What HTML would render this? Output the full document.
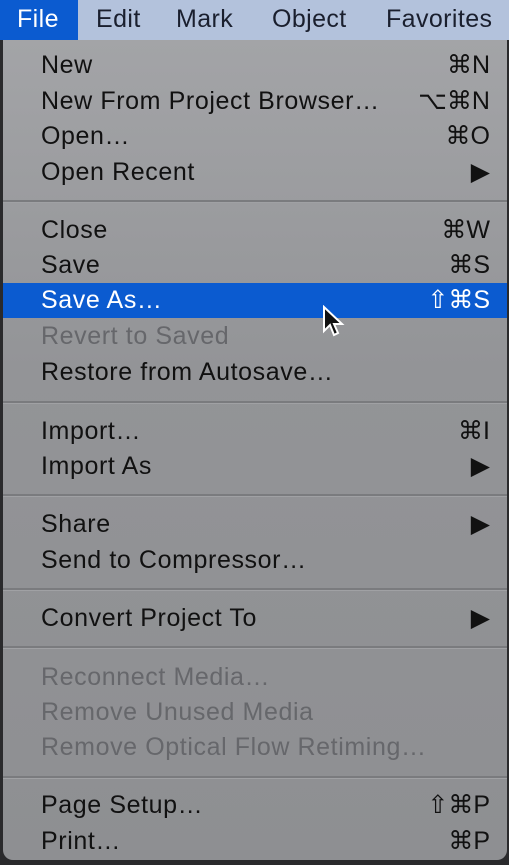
<!DOCTYPE html><html><head><style>
body{margin:0;width:509px;height:865px;background:#2a2a2c;overflow:hidden;font-family:"Liberation Sans",sans-serif;position:relative}
.bar{position:absolute;left:0;top:0;width:509px;height:40px;background:#b3c2dc;}
.bar span{position:absolute;top:5px;font-size:25px;letter-spacing:0.4px;color:#1a1f2e}
.menu{position:absolute;left:3px;top:40px;width:504px;height:820px;background:linear-gradient(#a3a4a7,#939497 40%,#8e8f92);border-radius:0 0 10px 10px}
.r{position:absolute;left:41px;font-size:25px;letter-spacing:0.6px;color:#111;line-height:36px;height:36px;white-space:nowrap}
.k{position:absolute;right:19px;font-size:25px;color:#111;line-height:36px;height:36px;white-space:nowrap}
.d{color:#66676b}
.sep{position:absolute;left:3px;width:504px;height:2px;background:#7a7b7e;border-bottom:1px solid #a0a1a4}
.hl{position:absolute;left:3px;top:283px;width:504px;height:35px;background:#0b5bd0}
</style></head><body>
<div class="bar"><div style="position:absolute;left:0;top:0;width:78px;height:40px;background:#0b5bd0"></div>
<span style="left:17px;color:#fff">File</span><span style="left:96px">Edit</span><span style="left:176px">Mark</span><span style="left:272px">Object</span><span style="left:386px">Favorites</span></div>
<div class="menu"></div>
<div class="hl"></div>
<div class="r" style="top:47px">New</div><div class="k" style="top:47px">⌘N</div>
<div class="r" style="top:83px">New From Project Browser…</div><div class="k" style="top:83px">⌥⌘N</div>
<div class="r" style="top:118px">Open…</div><div class="k" style="top:118px">⌘O</div>
<div class="r" style="top:154px">Open Recent</div><div class="k" style="top:154px">▶</div>
<div class="sep" style="top:200px"></div>
<div class="r" style="top:212px">Close</div><div class="k" style="top:212px">⌘W</div>
<div class="r" style="top:247px">Save</div><div class="k" style="top:247px">⌘S</div>
<div class="r" style="top:282px;color:#fff">Save As…</div><div class="k" style="top:282px;color:#fff">⇧⌘S</div>
<div class="r d" style="top:318px">Revert to Saved</div>
<div class="r" style="top:354px">Restore from Autosave…</div>
<div class="sep" style="top:401px"></div>
<div class="r" style="top:413px">Import…</div><div class="k" style="top:413px">⌘I</div>
<div class="r" style="top:448px">Import As</div><div class="k" style="top:448px">▶</div>
<div class="sep" style="top:494px"></div>
<div class="r" style="top:506px">Share</div><div class="k" style="top:506px">▶</div>
<div class="r" style="top:542px">Send to Compressor…</div>
<div class="sep" style="top:588px"></div>
<div class="r" style="top:600px">Convert Project To</div><div class="k" style="top:600px">▶</div>
<div class="sep" style="top:646px"></div>
<div class="r d" style="top:659px">Reconnect Media…</div>
<div class="r d" style="top:694px">Remove Unused Media</div>
<div class="r d" style="top:729px">Remove Optical Flow Retiming…</div>
<div class="sep" style="top:776px"></div>
<div class="r" style="top:787px">Page Setup…</div><div class="k" style="top:787px">⇧⌘P</div>
<div class="r" style="top:823px">Print…</div><div class="k" style="top:823px">⌘P</div>
<svg style="position:absolute;left:322px;top:305px" width="24" height="36" viewBox="0 0 24 36"><path d="M2 2 L2 26 L8 20 L12 30 L16 28 L12 19 L20 19 Z" fill="#111" stroke="#fff" stroke-width="2"/></svg>
</body></html>
